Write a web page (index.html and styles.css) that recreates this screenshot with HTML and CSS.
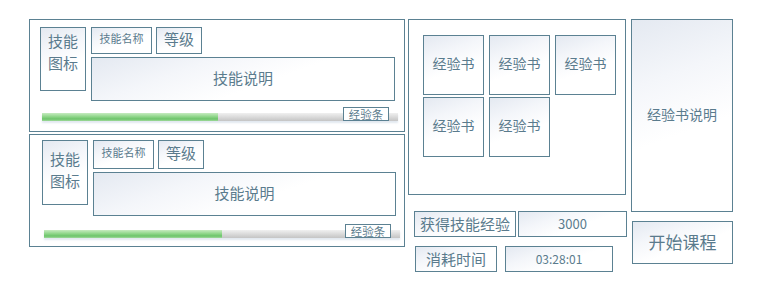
FILE: index.html
```html
<!DOCTYPE html>
<html lang="zh">
<head>
<meta charset="utf-8">
<link rel="stylesheet" href="styles.css">
</head>
<body>
<div class="page">
  <div class="skills">
    <div class="skill">
      <div class="skill-top">
        <div class="box icon">技能<br>图标</div>
        <div class="info">
          <div class="info-row">
            <div class="box name">技能名称</div>
            <div class="box level">等级</div>
          </div>
          <div class="box desc">技能说明</div>
        </div>
      </div>
      <div class="bar">
        <div class="track"><div class="fill" style="width:49.5%"></div></div>
        <div class="bar-label">经验条</div>
      </div>
    </div>
    <div class="skill skill-alt">
      <div class="skill-top">
        <div class="box icon">技能<br>图标</div>
        <div class="info">
          <div class="info-row">
            <div class="box name">技能名称</div>
            <div class="box level">等级</div>
          </div>
          <div class="box desc">技能说明</div>
        </div>
      </div>
      <div class="bar">
        <div class="track"><div class="fill" style="width:50%"></div></div>
        <div class="bar-label">经验条</div>
      </div>
    </div>
  </div>
  <div class="middle">
    <div class="books">
      <div class="box book">经验书</div>
      <div class="box book">经验书</div>
      <div class="box book">经验书</div>
      <div class="box book">经验书</div>
      <div class="box book">经验书</div>
    </div>
    <div class="stat-row stat-row-1">
      <div class="box stat-label gain">获得技能经验</div>
      <div class="box stat-value gain-value">3000</div>
    </div>
    <div class="stat-row stat-row-2">
      <div class="box stat-label cost">消耗时间</div>
      <div class="box stat-value cost-value">03:28:01</div>
    </div>
  </div>
  <div class="right">
    <div class="box book-desc">经验书说明</div>
    <div class="box start">开始课程</div>
  </div>
</div>
</body>
</html>
```

FILE: styles.css
```css
* { box-sizing: border-box; }
html, body { margin: 0; padding: 0; background: #fff; }
body {
  width: 757px;
  height: 291px;
  font-family: "Noto Sans CJK SC", "Noto Sans", sans-serif;
  color: #5a7b8d;
  overflow: hidden;
}
.page {
  display: flex;
  align-items: flex-start;
  padding: 19px 0 0 29px;
}
.box {
  border: 1px solid #5b8192;
  background: linear-gradient(160deg, #e4e9f1 0%, #f4f6fa 30%, #ffffff 58%);
  display: flex;
  align-items: center;
  justify-content: center;
  text-align: center;
  line-height: 1.3;
}
.skills {
  display: flex;
  flex-direction: column;
  gap: 2px;
}
.skill {
  width: 376px;
  height: 113px;
  border: 1px solid #5b8192;
  padding: 7px 0 0 10px;
  display: flex;
  flex-direction: column;
}
.skill-alt { padding: 5px 0 0 12px; }
.skill-top {
  display: flex;
  gap: 5px;
  align-items: flex-start;
}
.icon {
  width: 46px;
  height: 64px;
  font-size: 15px;
  line-height: 22px;
  padding-bottom: 14px;
}
.skill-alt .icon { height: 65px; padding-bottom: 6px; }
.info {
  display: flex;
  flex-direction: column;
  gap: 3px;
}
.info-row { display: flex; gap: 4px; }
.name { width: 61px; height: 27px; font-size: 11px; padding-bottom: 4px; }
.level { width: 46px; height: 27px; font-size: 15px; padding-bottom: 3px; }
.skill-alt .name, .skill-alt .level { height: 29px; }
.desc { width: 304px; height: 44px; font-size: 15px; padding-bottom: 2px; }
.skill-alt .desc { width: 303px; }
.bar {
  position: relative;
  margin: 6px 0 0 2px;
  width: 356px;
  height: 14px;
}
.skill-alt .bar { margin-top: 8px; }
.track {
  position: absolute;
  left: 0;
  right: 0;
  top: 6px;
  height: 8px;
  background: linear-gradient(#f0f0f0, #d6d6d6 60%, #c4c4c4);
  box-shadow: 0 2px 2px rgba(170, 190, 210, 0.35);
}
.fill {
  height: 100%;
  background: linear-gradient(#c6ebc0, #8fd68a 45%, #6cc46a 75%, #9fd99b);
}
.bar-label {
  position: absolute;
  right: 9px;
  top: 0;
  width: 46px;
  height: 14px;
  border: 1px solid #5b8192;
  background: #fff;
  font-size: 11.5px;
  line-height: 12px;
  text-align: center;
}
.middle {
  margin-left: 3px;
  display: flex;
  flex-direction: column;
}
.books {
  width: 218px;
  height: 176px;
  border: 1px solid #5b8192;
  padding: 15px 0 0 14px;
  display: grid;
  grid-template-columns: repeat(3, 61px);
  grid-auto-rows: 60px;
  column-gap: 5px;
  row-gap: 2px;
  align-content: start;
}
.book { font-size: 14px; padding-bottom: 3px; }
.stat-row { display: flex; }
.stat-row-1 { margin: 16px 0 0 6px; gap: 2px; }
.stat-row-2 { margin: 9px 0 0 7px; gap: 8px; }
.stat-label, .stat-value { height: 26px; }
.gain { width: 102px; font-size: 15px; }
.gain-value { width: 109px; font-size: 13px; }
.cost { width: 82px; font-size: 15px; }
.cost-value { width: 108px; font-size: 12px; }
.right {
  margin-left: 4px;
  display: flex;
  flex-direction: column;
}
.book-desc {
  width: 102px;
  height: 193px;
  font-size: 14px;
  padding-bottom: 2px;
}
.start {
  margin: 9px 0 0 1px;
  width: 101px;
  height: 43px;
  font-size: 17px;
}
```
